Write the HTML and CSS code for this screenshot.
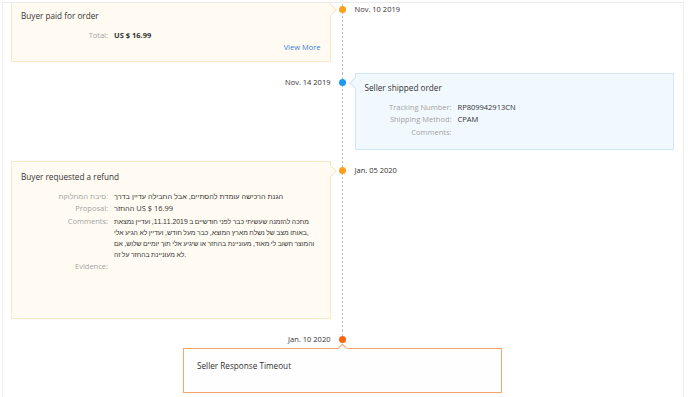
FILE: index.html
```html
<!DOCTYPE html>
<html lang="en">
<head>
    <meta charset="UTF-8">
    <meta name="viewport" content="width=device-width, initial-scale=1.0">
    <title>Order Timeline</title>
    <link rel="stylesheet" href="styles.css">
</head>
<body>
    <div class="frame">
        <div class="timeline">

            <div class="item">
                <div class="card card-buyer arrow-right">
                    <div class="card-title">Buyer paid for order</div>
                    <div class="row">
                        <span class="label">Total:</span>
                        <span class="value strong">US $ 16.99</span>
                    </div>
                    <div class="more"><a href="#">View More</a></div>
                </div>
                <div class="axis"><span class="dot dot-orange"></span></div>
                <div class="date">Nov. 10 2019</div>
            </div>

            <div class="item">
                <div class="date date-left">Nov. 14 2019</div>
                <div class="axis"><span class="dot dot-blue"></span></div>
                <div class="card card-seller arrow-left">
                    <div class="card-title">Seller shipped order</div>
                    <div class="row">
                        <span class="label">Tracking Number:</span>
                        <span class="value">RP809942913CN</span>
                    </div>
                    <div class="row">
                        <span class="label">Shipping Method:</span>
                        <span class="value">CPAM</span>
                    </div>
                    <div class="row">
                        <span class="label">Comments:</span>
                        <span class="value"></span>
                    </div>
                </div>
            </div>

            <div class="item">
                <div class="card card-buyer card-tall arrow-right">
                    <div class="card-title">Buyer requested a refund</div>
                    <div class="row">
                        <span class="label he">סיבת המחלוקת:</span>
                        <span class="value he">הגנת הרכישה עומדת להסתיים, אבל החבילה עדיין בדרך</span>
                    </div>
                    <div class="row">
                        <span class="label">Proposal:</span>
                        <span class="value"><span class="he">ההחזר</span> US $ 16.99</span>
                    </div>
                    <div class="row">
                        <span class="label">Comments:</span>
                        <span class="value he comment">מחכה להזמנה שעשיתי כבר לפני חודשיים ב 11.11.2019, ועדיין נמצאת<br>באותו מצב של נשלח מארץ המוצא, כבר מעל חודש, ועדיין לא הגיע אלי,<br>והמוצר חשוב לי מאוד, מעוניינת בהחזר או שיגיע אלי תוך יומיים שלוש, אם<br>לא מעוניינת בהחזר על זה.</span>
                    </div>
                    <div class="row">
                        <span class="label">Evidence:</span>
                        <span class="value"></span>
                    </div>
                </div>
                <div class="axis"><span class="dot dot-orange"></span></div>
                <div class="date">Jan. 05 2020</div>
            </div>

            <div class="item item-last">
                <div class="date date-left">Jan. 10 2020</div>
                <div class="axis axis-end"><span class="dot dot-red"></span></div>
                <div></div>
            </div>
            <div class="card card-final arrow-up">
                <div class="card-title">Seller Response Timeout</div>
            </div>

        </div>
    </div>
</body>
</html>
```

FILE: styles.css
```css
body {
    margin: 0;
    background-color: #fff;
    font-family: "Open Sans", "Liberation Sans", sans-serif;
    color: #333;
}

.frame {
    box-sizing: border-box;
    width: 682px;
    height: 395px;
    margin: 2px 0 0 2px;
    border-top: 1px solid #ebebeb;
    border-left: 1px solid #efefef;
    border-right: 1px solid #efefef;
    overflow: hidden;
}

.timeline {
    margin-top: -3px;
    padding: 0 9px 0 8px;
}

.item {
    display: grid;
    grid-template-columns: minmax(0, 1fr) 24px minmax(0, 1fr);
}

.axis {
    display: flex;
    justify-content: center;
    align-items: flex-start;
    background: repeating-linear-gradient(to bottom, #bdbdbd 0 2px, transparent 2px 4px) no-repeat center / 1px 100%;
}

.dot {
    width: 7px;
    height: 7px;
    margin-top: 6px;
    border-radius: 50%;
}

.dot-orange { background-color: #f9a11b; }
.dot-blue { background-color: #1d9bf0; }
.dot-red { background-color: #ff6412; }

.date {
    padding-top: 4px;
    font-size: 7.5px;
    line-height: 11px;
    color: #333;
}

.date-left {
    text-align: right;
}

.card {
    position: relative;
    box-sizing: border-box;
    margin-bottom: 11px;
    padding: 9px 9px 8px;
    border: 1px solid #fbe7c6;
    background-color: #fffbf2;
}

.card-seller {
    padding-top: 8px;
    padding-bottom: 10px;
    border-color: #cfe7fa;
    background-color: #f1f8fe;
}

.card-tall {
    min-height: 158px;
}

.card-final {
    width: 319px;
    height: 45px;
    margin: 0 auto;
    padding: 11px 13px;
    border-color: #fca36d;
    background-color: #fefefe;
}

.arrow-right::after,
.arrow-left::after,
.arrow-up::after {
    content: "";
    position: absolute;
    width: 6px;
    height: 6px;
    background-color: inherit;
    border: 1px solid;
    border-color: inherit;
}

.arrow-right::after {
    top: 5px;
    right: -5px;
    border-left-color: transparent;
    border-bottom-color: transparent;
    transform: rotate(45deg);
}

.arrow-left::after {
    top: 5px;
    left: -5px;
    border-right-color: transparent;
    border-top-color: transparent;
    transform: rotate(45deg);
}

.arrow-up::after {
    top: -4px;
    left: 155px;
    width: 5px;
    height: 5px;
    border-right-color: transparent;
    border-bottom-color: transparent;
    transform: rotate(45deg);
}

.card-title {
    margin-bottom: 8.5px;
    font-size: 8.2px;
    line-height: 11px;
    color: #333;
}

.row {
    display: grid;
    grid-template-columns: 87px minmax(0, 1fr);
    column-gap: 6px;
    margin-bottom: 1.5px;
    font-size: 7.5px;
    line-height: 11px;
}

.label {
    text-align: right;
    color: #a3a3a3;
}

.value {
    color: #333;
}

.he {
    font-family: "Liberation Sans", "DejaVu Sans", sans-serif;
    font-size: 7.3px;
}

.comment {
    font-size: 6.8px;
    word-spacing: -0.4px;
    white-space: nowrap;
}

.strong {
    font-weight: bold;
}

.more {
    text-align: right;
    font-size: 7.5px;
    line-height: 11px;
}

.more a {
    color: #3a7fdc;
    text-decoration: none;
}

.item-last {
    height: 18px;
}

.axis-end {
    background-size: 1px 8px;
    background-position: center top;
}
```
